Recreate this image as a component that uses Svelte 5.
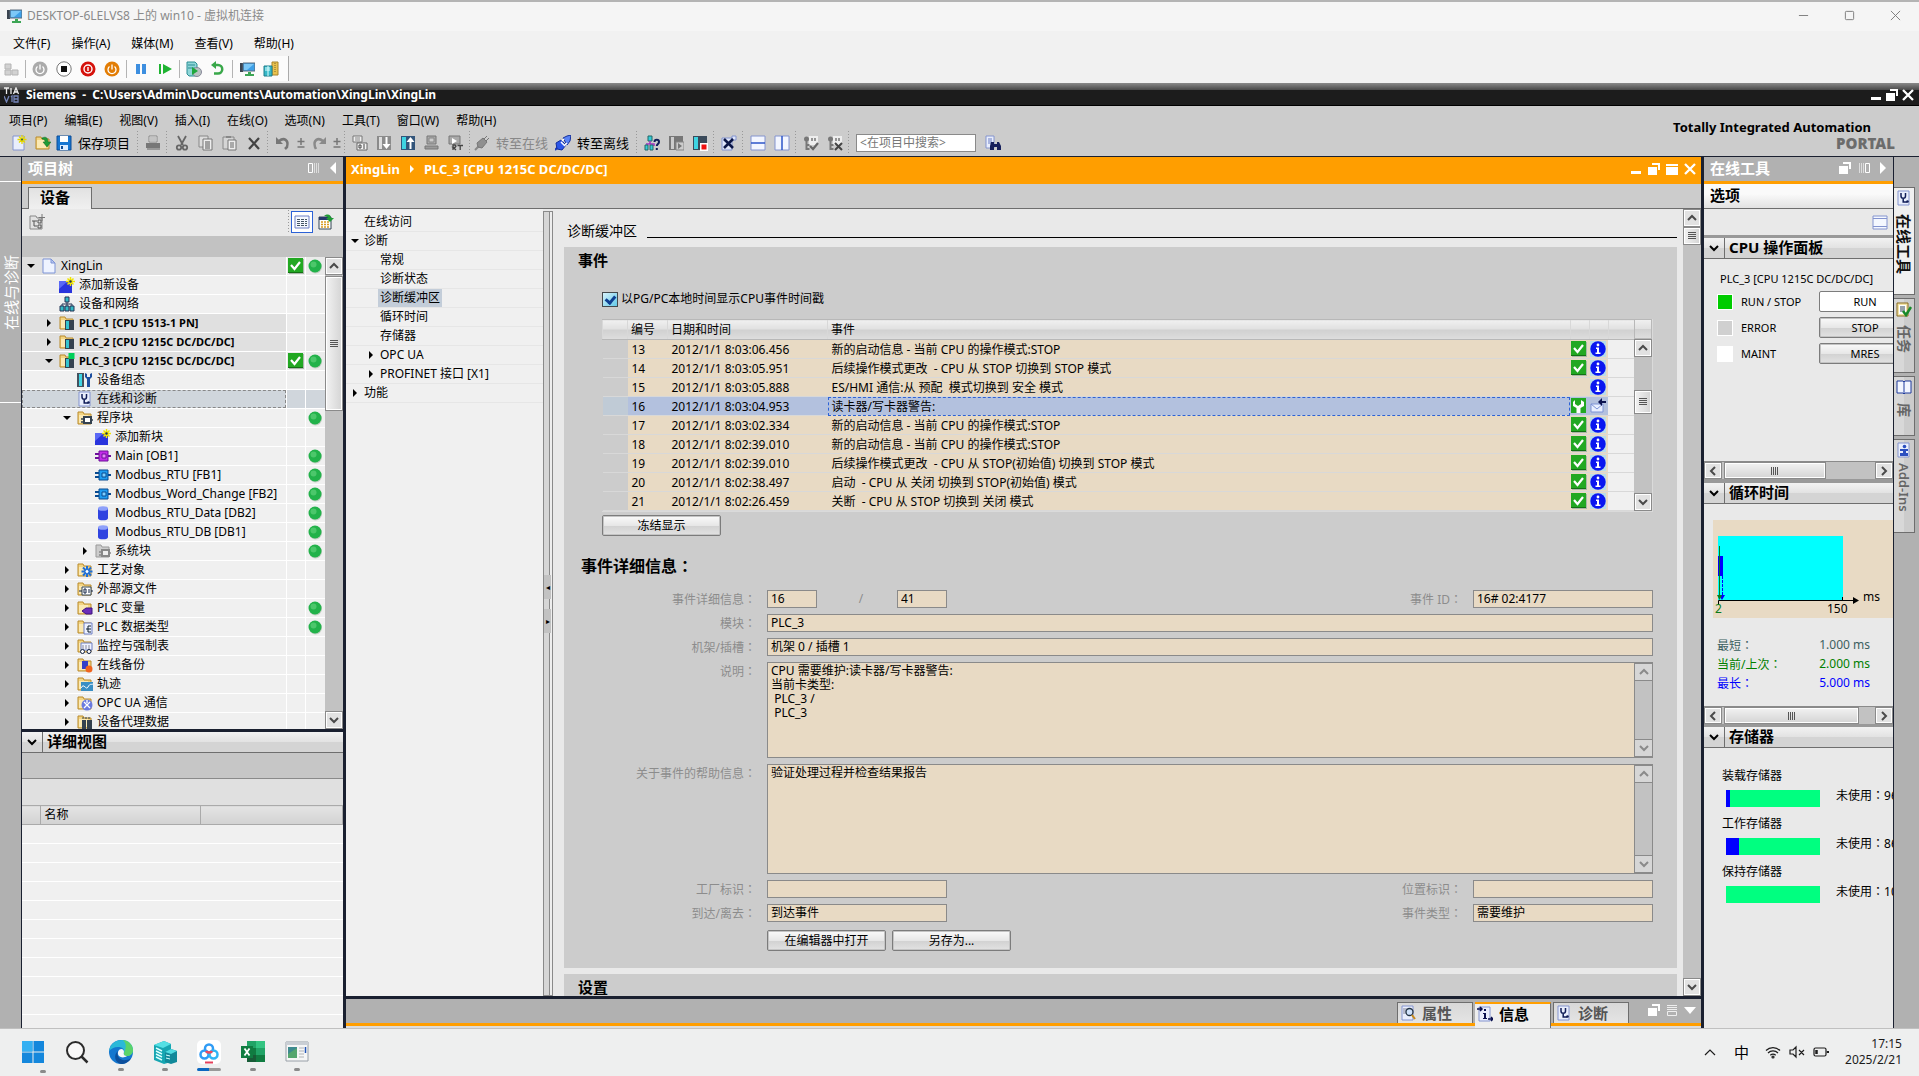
<script>
  const folder = '<path d="M1 2h5l1 2h7v10H1z" fill="#f3d583" stroke="#b98a2b"/><path d="M2 5h9v8H2z" fill="#fbe9b4"/>';
  const sheet = '<path d="M2 1h11v14H2z" fill="#e9eefc" stroke="#8494cf"/>';
  const I = {
    monitor: '<path d="M1 2h3v9H1z" fill="#3b4450"/><path d="M4 2h12v8H4z" fill="#3ea0e8" stroke="#5a6c7c"/><path d="M5 3h10l-7 6H5z" fill="#7cc8f7"/><path d="M9 11h3v2h3v2H6v-2h3z" fill="#3da555"/>',
    keys: '<path d="M1 3h6v5H1zM1 9h6v5H1zM8 9h6v5H8z" fill="#d2d2d2" stroke="#b5b5b5"/>',
    powerOff: '<circle cx="8" cy="8" r="7.5" fill="#aaa"/><path d="M5.5 5.5a4 4 0 1 0 5 0M8 3.5v5" fill="none" stroke="#fff" stroke-width="1.3"/>',
    stop: '<circle cx="8" cy="8" r="7.2" fill="#fff" stroke="#777"/><path d="M5 5h6v6H5z" fill="#111"/>',
    record: '<circle cx="8" cy="8" r="7.5" fill="#d5120c"/><circle cx="8" cy="8" r="4" fill="none" stroke="#fff" stroke-width="1.4"/><path d="M7.3 6h1.4v4H7.3z" fill="#fff"/>',
    powerOn: '<circle cx="8" cy="8" r="7.5" fill="#e27d05"/><path d="M5.5 5.5a4 4 0 1 0 5 0M8 3.5v5" fill="none" stroke="#fff" stroke-width="1.3"/>',
    pause: '<path d="M3 3h4v10H3zM9 3h4v10H9z" fill="#3d8fe0"/>',
    play: '<path d="M2 3h2v10H2zM6 3l9 5-9 5z" fill="#1fb432"/>',
    checkpoint: '<path d="M1 1h8l2 2v12H3L1 13z" fill="#8fd6d8" stroke="#2b8d93"/><path d="M2 4h7M2 7h7" stroke="#2b8d93"/><circle cx="11" cy="11" r="4.5" fill="#b9c3c3" stroke="#889"/><path d="M6 6l6 4-6 4z" fill="#1fa83c"/>',
    revert: '<path d="M5 4h3a4 4 0 0 1 0 8.500H4" fill="none" stroke="#39a84a" stroke-width="2.500"/><path d="M6 0v8L1 4z" fill="#39a84a"/>',
    share: '<path d="M9 1h6v13H9z" fill="#e9c24e" stroke="#a8842a"/><path d="M12 2v10" stroke="#7d642a" stroke-dasharray="1 1"/><path d="M1 5h8v10H1z" fill="#35b8c8" stroke="#1c7c8b"/><path d="M5 5v10M2 7h5M2 9h5" stroke="#dff"/>',
    tia: '<path d="M0 1h5M2.500 1v6M7 1v6M9.500 7l2.500-6 2.500 6M10.500 5h3" stroke="#eee" stroke-width="1.300" fill="none"/><path d="M0 9l2.500 6L5 9M7 10l1-1v6M10 9h4v6h-4zM10 12h4" stroke="#7484b8" stroke-width="1.300" fill="none"/>',
    newp: sheet + '<path d="M11 0v9M6.500 4.500h9M8 1.500l6 6M14 1.500l-6 6" stroke="#e6d800" stroke-width="1.300"/><circle cx="11" cy="4.500" r="1" fill="#355"/>',
    open: folder + '<path d="M7 3c4-2 6 0 6 4h3l-4 5-4-5h2c0-2-1-3-3-3z" fill="#1f9b35" stroke="#0d6a20" stroke-width=".5"/>',
    save: '<path d="M1 1h14v14H1z" fill="#1676d2" stroke="#0d4c96"/><path d="M4 1h8v6H4z" fill="#fff"/><path d="M4 10h8v5H4z" fill="#dcecff"/><path d="M5 11h2v3H5z" fill="#0d4c96"/>',
    print: '<path d="M4 1h8v6H4z" fill="#eee" stroke="#888"/><path d="M1 8h14v5H1z" fill="#777"/><path d="M2 13h13v2H2z" fill="#999"/><path d="M5 3h6M5 5h6" stroke="#999"/>',
    cut: '<path d="M4 1l5 9M12 1L7 10" stroke="#666" stroke-width="1.800"/><circle cx="5" cy="12.500" r="2.200" fill="none" stroke="#666" stroke-width="1.800"/><circle cx="11" cy="12.500" r="2.200" fill="none" stroke="#666" stroke-width="1.800"/>',
    copy: '<path d="M1 1h9v11H1z" fill="#ddd" stroke="#888"/><path d="M5 4h9v11H5z" fill="#eee" stroke="#777"/><path d="M7 7h5M7 9h5M7 11h5M7 13h5" stroke="#555"/>',
    paste: '<path d="M1 2h11v12H1z" fill="#d5d5d5" stroke="#888"/><path d="M4 1h5v2H4z" fill="#888"/><path d="M6 5h8v10H6z" fill="#eee" stroke="#777"/><path d="M8 8h4M8 10h4M8 12h4" stroke="#666"/>',
    del: '<path d="M3 3l10 11M13 3L3 14" stroke="#444" stroke-width="2.200"/>',
    undo: '<path d="M4 6c5-4 10-1 8 6l-2 2" fill="none" stroke="#777" stroke-width="2.500"/><path d="M1 2v7h7z" fill="#777"/>',
    redo: '<path d="M12 6C7 2 2 5 4 12l1 2" fill="none" stroke="#8a8a8a" stroke-width="2.500"/><path d="M15 2v7H8z" fill="#8a8a8a"/>',
    pm: '<path d="M8 3v7M4.500 6.500h7M4.500 12h7" stroke="#777" stroke-width="1.500"/>',
    compile: '<path d="M1 1h9v6H1z" fill="#eee" stroke="#777"/><path d="M3 3h5M3 5h5" stroke="#888"/><path d="M5 8h10v7H5z" fill="#f4f4f4" stroke="#666"/><path d="M7 10h2v3H7zM12 9v5" fill="none" stroke="#444"/>',
    down: '<path d="M1 1h14v14H1z" fill="#8b8b8b"/><path d="M3 2h3v12H3z" fill="#ddd"/><path d="M9.500 2h2v7h3l-4 5-4-5h3z" fill="#fff"/>',
    up: '<path d="M1 1h14v14H1z" fill="#33557a"/><path d="M2 2h4v12H2z" fill="#3fd4e2"/><path d="M9.500 14h2V7h3l-4-5-4 5h3z" fill="#fff"/>',
    sim: '<path d="M3 1h9v8H3z" fill="#aaa" stroke="#777"/><path d="M5 3h5v4H5z" fill="#ccc" stroke="#888"/><path d="M1 11h13v3H1z" fill="#9a9a9a" stroke="#777"/>',
    rt: '<path d="M1 1h11v8H1z" fill="#aaa" stroke="#777"/><path d="M4 3l5 3-5 3z" fill="#fff"/><path d="M5 15v-5h2l1 1-1 1.500H5l3 2.500M9.500 10.500H15M12.200 10v5" stroke="#444" fill="none" stroke-width="1.300"/>',
    plugOff: '<path d="M1 15l4-4" stroke="#888" stroke-width="2"/><path d="M3 8l6-5 4 4-5 6-4-1z" fill="#8f8f8f" stroke="#777"/><path d="M10 4l3-3M12 6l3-3" stroke="#777"/>',
    plugOn: '<path d="M0 15l4-4" stroke="#1c37b8" stroke-width="2"/><path d="M1 8l5-3 5 5-4 5-5-1z" fill="#2c56e8" stroke="#142f9c"/><path d="M8 3l4-2 4-1-1 6-3 4z" fill="#5a83f5" stroke="#142f9c"/><path d="M7 6l2-2M10 10l2-2M6 7l4 4" stroke="#fff" stroke-width="1.500"/>',
    access: '<path d="M4 1h4v5H4z" fill="#35cdd8" stroke="#266"/><path d="M6 6v3M2 9h8v2" stroke="#a030c0" fill="none" stroke-width="1.500"/><path d="M1 10h3v5H1zM6 10h3v5H6z" fill="#35cdd8" stroke="#266"/><path d="M10.500 7c0-3 4.500-3 4.500 0 0 2-2.200 2-2.200 4M12.800 13v2" stroke="#101d58" stroke-width="2" fill="none"/>',
    startg: '<path d="M1 1h14v14H1z" fill="#777"/><path d="M3 2h3v12H3z" fill="#ccc"/><path d="M8 7h8v8H8z" fill="#ccc" stroke="#888"/><path d="M10 8l4 3-4 3z" fill="#777"/>',
    stopc: '<path d="M1 1h14v14H1z" fill="#3a4a5a"/><path d="M2 2h4v12H2z" fill="#3fd4e2"/><path d="M8 8h8v8H8z" fill="#fff"/><path d="M9.500 9.500h5v5h-5z" fill="#f01010"/>',
    cross: '<path d="M1 3h10v12H1zM11 1h4v4h-4z" fill="#dfe6fa" stroke="#8494cf"/><path d="M3 4l9 9M12 4l-9 9" stroke="#0b1646" stroke-width="2.600"/>',
    splith: '<path d="M1 1h14v14H1z" fill="#f3f6ff" stroke="#8494cf"/><path d="M1 8h14" stroke="#2c55c8" stroke-width="1.500"/>',
    splitv: '<path d="M1 1h14v14H1z" fill="#f3f6ff" stroke="#8494cf"/><path d="M8 1v14" stroke="#2c55c8" stroke-width="1.500"/>',
    libok: '<path d="M6 1h9v9H6z" fill="#eee"/><circle cx="3.500" cy="4" r="2.500" fill="#777"/><path d="M3.500 5v10M3.500 10h3M3.500 14h3" stroke="#777" stroke-width="2"/><path d="M9 3v3M12 3v3" stroke="#777" stroke-width="1.500"/><path d="M7 11l3 3 5-6" stroke="#666" stroke-width="2.200" fill="none"/>',
    libx: '<path d="M6 1h9v9H6z" fill="#eee"/><circle cx="3.500" cy="4" r="2.500" fill="#777"/><path d="M3.500 5v10M3.500 10h3M3.500 14h3" stroke="#777" stroke-width="2"/><path d="M9 3v3M12 3v3" stroke="#777" stroke-width="1.500"/><path d="M8 8l7 7M15 8l-7 7" stroke="#444" stroke-width="2"/>',
    find: '<path d="M1 1h8v12H1z" fill="#e9eefc" stroke="#8494cf"/><path d="M3 4h4M3 6h4M3 8h4" stroke="#6c7fc4"/><path d="M6 7h3v8H5v-4zM12 7h2l2 4v4h-4zM9 9h3v3H9z" fill="#17205c"/>',
    proj: '<path d="M2 1h8l4 4v10H2z" fill="#eef3ff" stroke="#7d93d6"/><path d="M10 1v4h4z" fill="#b9c8f0" stroke="#7d93d6"/>',
    add: '<path d="M0 4h13v12H0z" fill="#2a35dd"/><path d="M0 4h9L0 12z" fill="#5a68f5"/><path d="M11.500 0v9M7 4.500h9M8.500 1.500l6 6M14.500 1.500l-6 6" stroke="#f0e400" stroke-width="1.500"/><circle cx="11.500" cy="4.500" r="1.200" fill="#235"/>',
    net: '<path d="M6 1h4v5H6zM1 10h4v5H1zM6 10h4v5H6zM11 10h4v5h-4z" fill="#35b8c4" stroke="#235"/><path d="M8 6v4M3 10V8h10v2" stroke="#235" fill="none"/>',
    plc: folder + '<path d="M6 5h9v10H6z" fill="#34414f"/><path d="M7 6h3v8H7z" fill="#35c4d0"/>',
    plcOn: folder + '<path d="M6 5h9v10H6z" fill="#34414f"/><path d="M7 6h3v8H7z" fill="#35c4d0"/><path d="M9.500 0h6v6h-6z" fill="#00d05a"/>',
    config: '<path d="M0 1h7v14H0z" fill="#44515e"/><path d="M2 2h3v12H2z" fill="#3fd4e2"/><path d="M8 1v4l2 2v8h3V7l2-2V1l-2 1v3h-3V2z" fill="#1d4fa0"/>',
    diag: sheet + '<path d="M5 3v3a2.200 2.200 0 0 0 4.500 0V3M7.200 8v4h4" stroke="#101d58" stroke-width="1.500" fill="none"/><circle cx="11.500" cy="11.500" r="1.300" fill="#101d58"/>',
    blocks: folder + '<path d="M7 7h7v6H7z" fill="#fff" stroke="#34414f" stroke-width="2"/><path d="M4 9h3M4 12h3M14 10h2" stroke="#34414f" stroke-width="1.500"/>',
    sysblocks: '<path d="M1 2h5l1 2h7v10H1z" fill="#ccc" stroke="#999"/><path d="M7 7h7v6H7z" fill="#eee" stroke="#888" stroke-width="2"/><path d="M4 9h3M4 12h3M14 10h2" stroke="#888" stroke-width="1.500"/>',
    ob: '<path d="M4 3h9v10H4z" fill="#c22be8" stroke="#6d109a"/><path d="M7 6h4v4H7z" fill="#e58cf8" stroke="#6d109a"/><path d="M0 6h4M0 10h4M13 8h3" stroke="#6d109a" stroke-width="2"/>',
    fb: '<path d="M4 3h9v10H4z" fill="#1e9cf0" stroke="#084a90"/><path d="M7 6h4v4H7z" fill="#7fd0ff" stroke="#084a90"/><path d="M0 6h4M0 10h4M13 8h3" stroke="#084a90" stroke-width="2"/>',
    db: '<path d="M3 3v10a5 2.300 0 0 0 10 0V3z" fill="#2f43e0"/><ellipse cx="8" cy="3.500" rx="5" ry="2.300" fill="#8ea0fa"/>',
    tech: folder + '<path d="M10 4v11M4.500 9.500h11M6 5.500l8 8M14 5.500l-8 8" stroke="#1f6fd6" stroke-width="2"/><circle cx="10" cy="9.500" r="2" fill="#fff" stroke="#1f6fd6"/>',
    src: folder + '<path d="M5 6h9v8H5z" fill="#fff" stroke="#345"/><path d="M7 8h2v4H7zM12 8v4M2 10h3M14 10h2" stroke="#124" fill="none"/>',
    tags: folder + '<path d="M5 11l4-3h6v6H9z" fill="#6b2db8" stroke="#3f1480"/>',
    types: folder + '<path d="M7 4h8v11H7z" fill="#eef2ff" stroke="#6c7fc4"/><path d="M9 10h2M11 7v6M11 7h3M11 10h3M11 13h3" stroke="#123"/>',
    watch: folder + '<path d="M4 5h11v7H4z" fill="#eef2ff" stroke="#6c7fc4"/><path d="M5 8h9M5 10h9" stroke="#889" stroke-dasharray="2 1"/><circle cx="5.500" cy="13.500" r="2" fill="#fff" stroke="#124"/><circle cx="12" cy="13.500" r="2" fill="#fff" stroke="#124"/>',
    backup: folder + '<path d="M5 4h6v8H5z" fill="#3240c8"/><circle cx="12" cy="12" r="3.500" fill="#f0641e"/>',
    trace: folder + '<path d="M4 6h12v9H4z" fill="#3a8fc4"/><path d="M4 12c3-6 5 3 7-1s3-2 5-3" stroke="#fff" fill="none"/>',
    opc: folder + '<circle cx="10" cy="10" r="5.500" fill="#6a7be0"/><path d="M7 7l6 6M13 7l-6 6M10 5v3" stroke="#fff" stroke-width="1.300"/>',
    proxy: folder + '<path d="M5 6h4v9H5zM10 6h5v9h-5z" fill="#34414f"/><path d="M5 4h9" stroke="#345" stroke-dasharray="2 1"/>',
    ok: '<path d="M1 1h15v15H1z" fill="#a9b8a9"/><path d="M0 0h15v15H0z" fill="#22a822"/><path d="M0 14h15v1H0z" fill="#147014"/><path d="M3 7l3.500 4L12 4" stroke="#fff" stroke-width="2.200" fill="none"/>',
    dot: '<circle cx="8.500" cy="9" r="6.500" fill="#c3cfc3"/><circle cx="8" cy="8" r="6.500" fill="#22b24a"/><circle cx="6.500" cy="6.500" r="3" fill="#4cc76b"/>',
    info: '<path d="M0 0h16v16H0z" fill="#b9dcea"/><circle cx="8" cy="8" r="7.700" fill="#0a16f0"/><circle cx="8" cy="4" r="1.400" fill="#fff"/><path d="M6 6.500h3v5h1.500V13h-5v-1.500H7V8H6z" fill="#fff"/>',
    wrench: '<path d="M0 0h15v15H0z" fill="#22a822"/><path d="M4 2v4l3 2 3-2V2l3 2v4L9.500 10v5h-4v-5L2 8V4z" fill="#fff"/>',
    mail: '<path d="M1 6h12v8H1z" fill="#e8efff" stroke="#7d93d6"/><path d="M1 6l6 5 6-5" fill="none" stroke="#7d93d6"/><path d="M8 4l4-4v3h4v2h-4v3z" fill="#0b1250"/>',
    treeNew: '<path d="M1 2h6l1 2h5v11H1z" fill="#e2e2e2" stroke="#888"/><path d="M3 7h5M5 7v5h3M9 6h3v3H9zM9 11h3v3H9z" stroke="#555" fill="none"/><path d="M13 0v7M9.500 3.500h7" stroke="#777"/>',
    list: '<path d="M1 2h14v12H1z" fill="#f5f8ff" stroke="#6c7fc4"/><path d="M3 5.500h10M3 7.500h10M3 9.500h10M3 11.500h10" stroke="#456" stroke-dasharray="3 1"/>',
    sync: '<path d="M1 3h12v12H1z" fill="#fff" stroke="#345"/><path d="M1 3h12v3H1z" fill="#26386b"/><path d="M3 8h9M3 10.500h9M3 13h9" stroke="#d99a1e" stroke-width="1.500" stroke-dasharray="2 1"/><path d="M6 2c4-3 7-1 7 2h3l-4 4-4-4h2c0-1-2-2-4-2z" fill="#1f9b35"/>',
    float: '<path d="M6 2h8v7h-2V4H6z" fill="#fff"/><path d="M2 6h9v8H2z" fill="#fff"/>',
    min: '<path d="M3 10h10v3H3z" fill="#fff"/>',
    max: '<path d="M2 3h12v2H2zM2 6h12v8H2z" fill="#fff"/>',
    close: '<path d="M3 3l10 10M13 3L3 13" stroke="#fff" stroke-width="2.300"/>',
    pinl: '<path d="M2.500 3.500h4v9h-4z" fill="none" stroke="#fff"/><path d="M8.500 3v10M10.500 3v10M12.500 3v10" stroke="#ddd"/>',
    pinr: '<path d="M9.500 3.500h4v9h-4z" fill="none" stroke="#fff"/><path d="M3.500 3v10M5.500 3v10M7.500 3v10" stroke="#ddd"/>',
    tril: '<path d="M11 2v12L5 8z" fill="#fff"/>',
    trir: '<path d="M5 2v12l6-6z" fill="#fff"/>',
    trid: '<path d="M2 5h12l-6 7z" fill="#fff"/>',
    lines: '<path d="M3 3.500h10M3 5.500h10M3 7.500h10M3.500 9.500h9v4h-9z" stroke="#eee" fill="none"/>',
    pane: '<path d="M1 2h14v13H1z" fill="#f5f8ff" stroke="#8494cf"/><path d="M1 4.500h14M1 12.500h14" stroke="#8494cf"/>',
    task: '<path d="M1 2h11v13H1z" fill="#f2e3a8" stroke="#8a6d20"/><path d="M3 4h7v9H3z" fill="#fff"/><path d="M4 6h5M4 8h5M4 10h5" stroke="#345"/><path d="M7 10l3 4 5-8" stroke="#178a2a" stroke-width="2.500" fill="none"/>',
    book: '<path d="M1 2h6l1 1 1-1h6v12H9l-1 1-1-1H1z" fill="#f2f6ff" stroke="#1e3a9c"/><path d="M8 3v11" stroke="#1e3a9c"/>',
    addin: sheet + '<circle cx="8.500" cy="4.500" r="1.800" fill="#2c4fc0"/><path d="M4 7h8v2h-2v2h2v3H4v-3h3V9H4z" fill="#2c4fc0"/>',
    prop: sheet + '<path d="M3 4h4M3 6h3M3 8h3" stroke="#889"/><circle cx="9.500" cy="7" r="3.500" fill="#cfe2fa" stroke="#234" stroke-width="1.300"/><path d="M12 10l3 4" stroke="#c98a1a" stroke-width="2"/>',
    inf: sheet + '<path d="M0 3h5M3 1l2 2-2 2M11 13h5M14 11l2 2-2 2" stroke="#0b1250" stroke-width="1.500" fill="none"/><path d="M7 3h2v2H7zM6 7h3v5h1v1H6v-1h1V8H6z" fill="#0b1250"/>'
  };

  const hostMenu = ['文件(F)', '操作(A)', '媒体(M)', '查看(V)', '帮助(H)'];
  const hostTools = ['keys', '|', 'powerOff', 'stop', 'record', 'powerOn', '|', 'pause', 'play', '|', 'checkpoint', 'revert', '|', 'monitor', 'share'];
  const menu = ['项目(P)', '编辑(E)', '视图(V)', '插入(I)', '在线(O)', '选项(N)', '工具(T)', '窗口(W)', '帮助(H)'];
  const tools = [
    'newp', 'open', ['save', '保存项目'], '|', 'print', '|', 'cut', 'copy', 'paste', 'del', '|', 'undo', 'pm', 'redo', 'pm', '|',
    'compile', 'down', 'up', 'sim', 'rt', '|', ['plugOff', '转至在线', 'off'], ['plugOn', '转至离线'], '|', 'access', 'startg', 'stopc', '|',
    'cross', '|', 'splith', 'splitv', '|', 'libok', 'libx', '|'
  ];

  // level, arrow (d = open, r = closed), icon, label, style, ok mark, status dot
  const tree = [
    [0, 'd', 'proj', 'XingLin', 'head', 1, 1],
    [1, '', 'add', '添加新设备'],
    [1, '', 'net', '设备和网络'],
    [1, 'r', 'plc', 'PLC_1 [CPU 1513-1 PN]', 'head strong'],
    [1, 'r', 'plc', 'PLC_2 [CPU 1215C DC/DC/DC]', 'head strong'],
    [1, 'd', 'plcOn', 'PLC_3 [CPU 1215C DC/DC/DC]', 'head strong', 1, 1],
    [2, '', 'config', '设备组态'],
    [2, '', 'diag', '在线和诊断', 'sel'],
    [2, 'd', 'blocks', '程序块', '', 0, 1],
    [3, '', 'add', '添加新块'],
    [3, '', 'ob', 'Main [OB1]', '', 0, 1],
    [3, '', 'fb', 'Modbus_RTU [FB1]', '', 0, 1],
    [3, '', 'fb', 'Modbus_Word_Change [FB2]', '', 0, 1],
    [3, '', 'db', 'Modbus_RTU_Data [DB2]', '', 0, 1],
    [3, '', 'db', 'Modbus_RTU_DB [DB1]', '', 0, 1],
    [3, 'r', 'sysblocks', '系统块', '', 0, 1],
    [2, 'r', 'tech', '工艺对象'],
    [2, 'r', 'src', '外部源文件'],
    [2, 'r', 'tags', 'PLC 变量', '', 0, 1],
    [2, 'r', 'types', 'PLC 数据类型', '', 0, 1],
    [2, 'r', 'watch', '监控与强制表'],
    [2, 'r', 'backup', '在线备份'],
    [2, 'r', 'trace', '轨迹'],
    [2, 'r', 'opc', 'OPC UA 通信'],
    [2, 'r', 'proxy', '设备代理数据']
  ];

  const nav = [
    ['n0', '', '在线访问'], ['n0', 'd', '诊断'], ['n1', '', '常规'], ['n1', '', '诊断状态'], ['n1', '', '诊断缓冲区', 'on'],
    ['n1', '', '循环时间'], ['n1', '', '存储器'], ['n1', 'r', 'OPC UA'], ['n1', 'r', 'PROFINET 接口 [X1]'], ['n0', 'r', '功能']
  ];

  const events = [
    [13, '2012/1/1 8:03:06.456', '新的启动信息 - 当前 CPU 的操作模式:STOP', 'ok', 'info'],
    [14, '2012/1/1 8:03:05.951', '后续操作模式更改  - CPU 从 STOP 切换到 STOP 模式', 'ok', 'info'],
    [15, '2012/1/1 8:03:05.888', 'ES/HMI 通信:从 预配  模式切换到 安全 模式', '', 'info'],
    [16, '2012/1/1 8:03:04.953', '读卡器/写卡器警告:', 'wrench', 'mail'],
    [17, '2012/1/1 8:03:02.334', '新的启动信息 - 当前 CPU 的操作模式:STOP', 'ok', 'info'],
    [18, '2012/1/1 8:02:39.010', '新的启动信息 - 当前 CPU 的操作模式:STOP', 'ok', 'info'],
    [19, '2012/1/1 8:02:39.010', '后续操作模式更改  - CPU 从 STOP(初始值) 切换到 STOP 模式', 'ok', 'info'],
    [20, '2012/1/1 8:02:38.497', '启动  - CPU 从 关闭 切换到 STOP(初始值) 模式', 'ok', 'info'],
    [21, '2012/1/1 8:02:26.459', '关断  - CPU 从 STOP 切换到 关闭 模式', 'ok', 'info']
  ];

  const memory = [['装载存储器', 4, '96'], ['工作存储器', 14, '86'], ['保持存储器', 0, '10']];
  const description = 'CPU 需要维护:读卡器/写卡器警告:\n当前卡类型:\n PLC_3 /\n PLC_3';
</script>

{#snippet ic(n)}<svg class="ic" viewBox="0 0 16 16" width="16" height="16" aria-hidden="true">{@html I[n]}</svg>{/snippet}
{#snippet arrow(d)}<span class="arrow">{#if d}<svg viewBox="0 0 10 10" width="10" height="10"><path d={d === 'd' ? 'M1 3h8L5 7z' : 'M3 1v8l4-4z'} /></svg>{/if}</span>{/snippet}
{#snippet chev(d)}<svg class="chev" viewBox="0 0 12 12" width="12" height="12"><path d={{ u: 'M2 8l4-4 4 4', d: 'M2 4l4 4 4-4', l: 'M8 2L4 6l4 4', r: 'M4 2l4 4-4 4' }[d]} /></svg>{/snippet}
{#snippet sbtn(d, name)}<button class="sbtn" aria-label={name}>{@render chev(d)}</button>{/snippet}
{#snippet colon()}<span class="colon">：</span>{/snippet}
{#snippet vbar(kind)}
  <div class="vbar {kind}">
    {@render sbtn('u', '向上滚动')}
    <div class="track"><div class="thumb"><i></i></div></div>
    {@render sbtn('d', '向下滚动')}
  </div>
{/snippet}
{#snippet hbar(kind)}
  <div class="hbar {kind}">
    {@render sbtn('l', '向左滚动')}
    <div class="track"><div class="thumb"><i></i></div></div>
    {@render sbtn('r', '向右滚动')}
  </div>
{/snippet}
{#snippet section(title)}
  <header class="section"><button aria-label="折叠">{@render chev('d')}</button><h2>{title}</h2></header>
{/snippet}

<div class="screen">
  <header class="host">
    <div class="hosttitle">
      {@render ic('monitor')}<span>DESKTOP-6LELVS8 上的 win10 - 虚拟机连接</span>
      <div class="winbtns">
        <button aria-label="最小化"><svg viewBox="0 0 12 12"><path d="M1 6h10" /></svg></button>
        <button aria-label="最大化"><svg viewBox="0 0 12 12"><rect x="1.500" y="1.500" width="9" height="9" rx="1" /></svg></button>
        <button aria-label="关闭"><svg viewBox="0 0 12 12"><path d="M1 1l10 10M11 1L1 11" /></svg></button>
      </div>
    </div>
    <nav class="hostmenu">{#each hostMenu as m}<button>{m}</button>{/each}</nav>
    <div class="hosttools">
      {#each hostTools as t}{#if t === '|'}<span class="hsep"></span>{:else}<button aria-label={t}>{@render ic(t)}</button>{/if}{/each}
    </div>
  </header>

  <div class="tiatitle">
    {@render ic('tia')}<span>Siemens&nbsp; - &nbsp;C:\Users\Admin\Documents\Automation\XingLin\XingLin</span>
    <div class="icons">{#each ['min', 'float', 'close'] as n}<button aria-label={n}>{@render ic(n)}</button>{/each}</div>
  </div>

  <div class="tiahead">
    <div class="bars">
      <nav class="menu">{#each menu as m}<button>{m}</button>{/each}</nav>
      <div class="tools">
        {#each tools as t}
          {#if t === '|'}<span class="sep"></span>
          {:else if Array.isArray(t)}<button class="lab {t[2] ?? ''}">{@render ic(t[0])}<span>{t[1]}</span></button>
          {:else}<button class={t} aria-label={t}>{@render ic(t)}</button>{/if}
        {/each}
        <input class="search" type="text" placeholder="<在项目中搜索>" aria-label="在项目中搜索" />
        <button aria-label="搜索">{@render ic('find')}</button>
      </div>
    </div>
    <div class="brand"><span>Totally Integrated Automation</span><strong>PORTAL</strong></div>
  </div>

  <div class="work">
    <aside class="leftstrip"><button>在线与诊断</button></aside>

    <section class="left">
      <header class="phead"><h2>项目树</h2><div class="icons"><button aria-label="固定">{@render ic('pinl')}</button><button aria-label="收起">{@render ic('tril')}</button></div></header>
      <div class="tabs"><button>设备</button></div>
      <div class="ptools">
        <button aria-label="新建">{@render ic('treeNew')}</button>
        <span class="sep"></span>
        <button class="act" aria-label="列表">{@render ic('list')}</button>
        <button aria-label="同步">{@render ic('sync')}</button>
      </div>
      <div class="gap"></div>
      <div class="treewrap">
        <ul class="tree">
          {#each tree as [lvl, arr, icon, label, cls, ok, dot]}
            <li class={cls}>
              <div class="name l{lvl}">{@render arrow(arr)}{@render ic(icon)}<span>{label}</span></div>
              <div class="cell">{#if ok}{@render ic('ok')}{/if}</div>
              <div class="cell last">{#if dot}{@render ic('dot')}{/if}</div>
            </li>
          {/each}
        </ul>
        {@render vbar('treebar')}
      </div>
      <div class="detail">
        {@render section('详细视图')}
        <div class="dtools"></div>
        <div class="dfilter"></div>
        <table class="dtable"><thead><tr><th class="c0"></th><th class="c1">名称</th><th></th></tr></thead></table>
        <div class="drows"></div>
      </div>
    </section>

    <main>
      <header class="mhead">
        <span>XingLin</span><svg viewBox="0 0 8 10" width="8" height="10"><path d="M2 1v8l4-4z" fill="#fff" /></svg><span>PLC_3 [CPU 1215C DC/DC/DC]</span>
        <div class="icons">{#each ['min', 'float', 'max', 'close'] as n}<button aria-label={n}>{@render ic(n)}</button>{/each}</div>
      </header>
      <div class="mbar"></div>
      <div class="mbody">
        <ul class="nav">
          {#each nav as [lvl, arr, label, on]}<li class={lvl}>{@render arrow(arr)}<a href="#diag" class={on}>{label}</a></li>{/each}
        </ul>
        <div class="splitter"><button aria-label="收起导航">◂</button><button aria-label="展开导航">▸</button></div>
        <div class="content">
          <h1>诊断缓冲区</h1>
          <section class="box">
            <h3>事件</h3>
            <label class="check"><input type="checkbox" checked /><span>以PG/PC本地时间显示CPU事件时间戳</span></label>
            <div class="grid">
              <table class="events">
                <colgroup><col class="k0" /><col class="k1" /><col class="k2" /><col /><col class="k4" /><col class="k4" /><col class="k6" /></colgroup>
                <thead><tr><th></th><th>编号</th><th>日期和时间</th><th>事件</th><th></th><th></th><th></th></tr></thead>
                <tbody>
                  {#each events as [no, time, text, a, b]}
                    <tr class:picked={no === 16}>
                      <td></td><td>{no}</td><td>{time}</td><td class="txt">{text}</td>
                      <td class="im">{#if a}{@render ic(a)}{/if}</td><td class="im">{@render ic(b)}</td><td></td>
                    </tr>
                  {/each}
                </tbody>
              </table>
              <div class="gridbar"><div class="corner"></div>{@render vbar('evbar')}</div>
            </div>
            <button class="btn freeze">冻结显示</button>

            <h3 class="big">事件详细信息{@render colon()}</h3>
            <div class="form">
              <div class="row">
                <label for="f-no">事件详细信息{@render colon()}</label><input id="f-no" class="w50" readonly value="16" />
                <span class="slash">/</span><input class="w50" readonly value="41" aria-label="事件总数" />
                <span class="fill"></span>
                <label for="f-id">事件 ID{@render colon()}</label><input id="f-id" class="w180" readonly value="16# 02:4177" />
              </div>
              <div class="row"><label for="f-mod">模块{@render colon()}</label><input id="f-mod" class="wide" readonly value="PLC_3" /></div>
              <div class="row"><label for="f-rack">机架/插槽{@render colon()}</label><input id="f-rack" class="wide" readonly value="机架 0 / 插槽 1" /></div>
              <div class="row"><label for="f-desc">说明{@render colon()}</label><div class="area a1"><textarea id="f-desc" readonly value={description}></textarea>{@render vbar('plain')}</div></div>
              <div class="row"><label for="f-help">关于事件的帮助信息{@render colon()}</label><div class="area a2"><textarea id="f-help" readonly value="验证处理过程并检查结果报告"></textarea>{@render vbar('plain')}</div></div>
              <div class="row">
                <label for="f-plant">工厂标识{@render colon()}</label><input id="f-plant" class="w180" readonly value="" /><span class="fill"></span>
                <label for="f-loc">位置标识{@render colon()}</label><input id="f-loc" class="w180" readonly value="" />
              </div>
              <div class="row">
                <label for="f-in">到达/离去{@render colon()}</label><input id="f-in" class="w180" readonly value="到达事件" /><span class="fill"></span>
                <label for="f-type">事件类型{@render colon()}</label><input id="f-type" class="w180" readonly value="需要维护" />
              </div>
              <div class="actions"><button class="btn">在编辑器中打开</button><button class="btn">另存为...</button></div>
            </div>
          </section>
          <section class="box next"><h3>设置</h3></section>
        </div>
        {@render vbar('mainbar')}
      </div>
      <footer class="mtabs">
        <button>{@render ic('prop')}<span>属性</span></button>
        <button class="on">{@render ic('inf')}<span>信息</span></button>
        <button>{@render ic('diag')}<span>诊断</span></button>
        <div class="icons">{#each ['float', 'lines', 'trid'] as n}<button aria-label={n}>{@render ic(n)}</button>{/each}</div>
      </footer>
    </main>

    <section class="right">
      <header class="phead"><h2>在线工具</h2><div class="icons">{#each ['float', 'pinr', 'trir'] as n}<button aria-label={n}>{@render ic(n)}</button>{/each}</div></header>
      <h2 class="opt">选项</h2>
      <div class="rtools"><button aria-label="窗格">{@render ic('pane')}</button></div>
      {@render section('CPU 操作面板')}
      <div class="cpu">
        <p>PLC_3 [CPU 1215C DC/DC/DC]</p>
        <div class="led"><i class="run"></i><span>RUN / STOP</span><button class="btn lit">RUN</button></div>
        <div class="led"><i class="err"></i><span>ERROR</span><button class="btn">STOP</button></div>
        <div class="led"><i class="mnt"></i><span>MAINT</span><button class="btn">MRES</button></div>
      </div>
      {@render hbar('h1')}
      {@render section('循环时间')}
      <div class="cycle">
        <svg class="chart" width="200" height="98" viewBox="0 0 200 98">
          <rect width="200" height="98" fill="#e8dac4" />
          <rect x="5" y="16" width="125" height="64" fill="#0ff" />
          <rect x="5" y="36" width="5" height="20" fill="#00f" />
          <path d="M9.500 56v20" stroke="#00f" stroke-dasharray="3 1" /><path d="M6 75h6l-3 5z" fill="#00f" />
          <path d="M6.500 26v52" stroke="#0a7a1a" /><path d="M4 75h5l-2.500 5z" fill="#0a7a1a" />
          <path d="M5.500 85v-4.500h135M129.500 77v3" stroke="#000" fill="none" /><path d="M140 77v7l6-3.500z" />
          <text x="150" y="81">ms</text><text x="2" y="93" class="g">2</text><text x="114" y="93">150</text>
        </svg>
        <dl>
          <div class="c1"><dt>最短{@render colon()}</dt><dd>1.000 ms</dd></div>
          <div class="c2"><dt>当前/上次{@render colon()}</dt><dd>2.000 ms</dd></div>
          <div class="c3"><dt>最长{@render colon()}</dt><dd>5.000 ms</dd></div>
        </dl>
      </div>
      {@render hbar('h2')}
      {@render section('存储器')}
      <div class="mem">
        {#each memory as [name, used, free]}
          <div class="m"><span>{name}</span><div class="mr"><div class="meter"><i style:width="{used}%"></i></div><span>未使用{@render colon()}{free}</span></div></div>
        {/each}
      </div>
    </section>

    <aside class="rightstrip">
      <button class="t1 on">{@render ic('diag')}<span>在线工具</span></button>
      <button class="t2">{@render ic('task')}<span>任务</span></button>
      <button class="t3">{@render ic('book')}<span>库</span></button>
      <button class="t4">{@render ic('addin')}<span>Add-Ins</span></button>
    </aside>
  </div>

  <footer class="taskbar">
    <div class="apps">
      <button aria-label="开始"><svg viewBox="0 0 24 24"><path d="M1 1h10.500v10.500H1zM12.500 1H23v10.500H12.500zM1 12.500h10.500V23H1zM12.500 12.500H23V23H12.500z" fill="#1487dc" /><path d="M1 1h10.500v10.500H1z" fill="#35b0f2" /></svg></button>
      <button aria-label="搜索"><svg viewBox="0 0 24 24"><circle cx="10.500" cy="10.500" r="8.500" fill="#f8f8f8" stroke="#2b2b2b" stroke-width="2" /><path d="M16.500 16.500l6 6" stroke="#2b2b2b" stroke-width="2.500" /></svg></button>
      <button class="open" aria-label="Edge"><svg viewBox="0 0 24 24"><circle cx="12" cy="12" r="12" fill="#1477cf" /><path d="M0 11C1 3 8 0 13 0c7 0 11 5 11 10 0 4-3 6-6 6-2 0-4-1-3-3 1-4-2-6-6-6-4 0-7 2-9 4z" fill="#2bb9d8" /><path d="M14 0c7 1 10 6 10 10 0 4-3 6-6 6-2 0-4-1-3-3 2-5 3-9-1-13z" fill="#5ad36a" /><path d="M9 11c-2 5 2 10 8 9 2 0 4-1 5-2-2 4-6 6-10 6-6-1-8-9-3-13z" fill="#0c4f9c" /><path d="M9 12c1-4 6-4 6 0-1 3 1 4 3 4-4 3-10 1-9-4z" fill="#f4f8fb" /></svg></button>
      <button class="open" aria-label="服务器管理器"><svg viewBox="0 0 24 24"><path d="M1 5l10-4 7 3v18l-7 2-10-4z" fill="#16a6b2" /><path d="M1 5l10-4 7 3-8 4z" fill="#53e0e4" /><path d="M3 8l6 3M3 11l6 3M3 14l6 3M3 17l6 3" stroke="#d8ffff" stroke-width="1.500" /><path d="M12 12l6-3 6 2v11l-6 2-6-2z" fill="#11899a" /><path d="M12 12l6-3 6 2-6 3z" fill="#4fdce2" /><path d="M13 15l4 1M13 18l4 1" stroke="#d8ffff" /></svg></button>
      <button class="cur" aria-label="网盘"><svg viewBox="0 0 24 24"><rect width="24" height="24" rx="5" fill="#fff" /><circle cx="12" cy="8.500" r="4" fill="none" stroke="#2f9bf5" stroke-width="2.500" /><circle cx="7.500" cy="14.500" r="4" fill="none" stroke="#2f9bf5" stroke-width="2.500" /><circle cx="16.500" cy="14.500" r="4" fill="none" stroke="#2fb5f5" stroke-width="2.500" /><path d="M9 11c1 2 5 2 6 0" stroke="#f04a5c" stroke-width="2.500" fill="none" /><path d="M8 22.500h8" stroke="#e4405a" stroke-width="2" /></svg></button>
      <button class="open" aria-label="Excel"><svg viewBox="0 0 24 24"><path d="M6 1h18v21H6z" fill="#21a366" /><path d="M15 1h9v7h-9z" fill="#33c481" /><path d="M6 8h9v7H6zM15 15h9v7h-9z" fill="#107c41" /><path d="M6 15h9v7H6z" fill="#185c37" /><path d="M0 6h12v12H0z" fill="#107c41" /><path d="M3.500 8.500l5 7M8.500 8.500l-5 7" stroke="#fff" stroke-width="1.800" /></svg></button>
      <button class="open" aria-label="虚拟机"><svg viewBox="0 0 24 24"><path d="M1 2h22v19H1z" fill="#f6f6f6" stroke="#98a0a8" /><path d="M1 2h22v3H1z" fill="#c9ced4" /><path d="M3 7h9v11H3z" fill="#3e8a8f" /><path d="M3 14l9-6v10H3z" fill="#56a66e" /><path d="M14 8h5M14 11h5M14 14h5M14 17h5" stroke="#b0b4b8" /><path d="M20.500 7v6" stroke="#2255b8" stroke-width="1.500" /></svg></button>
    </div>
    <div class="tray">
      <svg viewBox="0 0 16 16"><path d="M3 11l5-5 5 5" /></svg>
      <span class="ime">中</span>
      <svg viewBox="0 0 16 16"><path d="M1 6.500a10 10 0 0 1 14 0M3 9a7 7 0 0 1 10 0M5.300 11.300a4 4 0 0 1 5.400 0" /><circle cx="8" cy="13" r="1" /></svg>
      <svg viewBox="0 0 16 16"><path d="M1 6h3l3-3v10l-3-3H1zM10 6l5 5M15 6l-5 5" /></svg>
      <svg viewBox="0 0 16 16"><rect x="1" y="4" width="12" height="8" rx="1.500" /><path d="M3.500 6v4M15 7v2" stroke-width="2.500" /></svg>
      <div class="clock"><span>17:15</span><span>2025/2/21</span></div>
    </div>
  </footer>
</div>

<style>
  :global(body) { margin: 0; }
  .screen, .screen :global(*) { box-sizing: border-box; }
  .screen { height: 100vh; display: flex; flex-direction: column; overflow: hidden; font: 12px/18px "Noto Sans", "Noto Sans CJK SC", sans-serif; color: #000; background: #f0f0f0; }
  button { font: inherit; color: inherit; background: none; border: 0; padding: 0; display: flex; align-items: center; justify-content: center; }
  h1, h2, h3, p, ul, dl, dd { margin: 0; padding: 0; list-style: none; font-weight: inherit; }
  .ic { flex: none; display: block; }
  .icons { display: flex; margin-left: auto; align-items: center; }
  .arrow { width: 10px; flex: none; display: flex; }
  .chev { fill: none; stroke: #4a4a4a; stroke-width: 2; display: block; }
  .colon { font-family: "Noto Sans CJK TC", sans-serif; }

  .host { flex: none; height: 83px; border-top: 2px solid #b4b4b4; background: #f1f1f1; }
  .hosttitle { height: 29px; display: flex; align-items: center; gap: 5px; padding: 0 1px 2px 6px; background: #f5f5f5; color: #8a8a8a; }
  .winbtns { margin-left: auto; display: flex; }
  .winbtns button { width: 46px; height: 26px; }
  .winbtns svg { width: 11px; height: 11px; fill: none; stroke: #777; }
  .hostmenu { display: flex; height: 25px; padding-left: 13px; gap: 21px; }
  .hosttools { display: flex; align-items: center; height: 25px; width: 289px; background: #fbfbfb; border-right: 1px solid #aaa; }
  .hosttools button { width: 24px; height: 24px; }
  .hosttools button:first-child { width: 23px; }
  .hsep { width: 1px; height: 18px; background: #b4b4b4; margin: 0 2px; }

  .tiatitle { flex: none; height: 23px; display: flex; align-items: center; gap: 6px; padding: 0 3px 0 4px; background: linear-gradient(#8a8a8a, #484848 7px, #1c1c1c 7px, #1c1c1c 22px, #000 22px); color: #fff; font-weight: 700; }
  .tiatitle .icons button { width: 16px; }
  .tiahead { flex: none; height: 51px; display: flex; justify-content: space-between; background: #ccc; border-bottom: 1px solid #1a2030; }
  .menu { display: flex; gap: 17px; padding: 5px 0 0 9px; height: 25px; }
  .tools { display: flex; align-items: center; height: 24px; padding-left: 7px; }
  .tools button { width: 24px; height: 24px; flex: none; }
  .tools .pm { width: 12px; }
  .tools .lab { width: auto; gap: 6px; font-size: 13px; padding: 0 6px 0 1px; }
  .tools .lab.off { color: #888; }
  .tools .sep { margin-right: 1px; }
  .sep { flex: none; width: 4px; height: 24px; background: repeating-linear-gradient(#999 0 1px, transparent 1px 3px) 1px 0 / 1px 100% no-repeat; }
  .search { width: 120px; height: 18px; margin: 0 5px 0 4px; padding: 0 3px; border: 1px solid #8a8a8a; background: #fff; font: inherit; border-radius: 0; }
  .search::placeholder { color: #777; }
  .brand { display: flex; flex-direction: column; align-items: flex-end; padding: 13px 24px 0 0; font-size: 13px; font-weight: 700; line-height: 16px; }
  .brand span { margin-right: 24px; }
  .brand strong { font-size: 15px; color: #6c6c6c; }

  .work { flex: 1; min-height: 0; display: flex; background: #1a2030; gap: 3px; }
  .leftstrip { width: 22px; flex: none; margin-right: -3px; background: #b1b1b1; border-right: 1px solid #1a2030; padding-top: 24px; }
  .leftstrip button { width: 21px; height: 222px; border: solid #fff; border-width: 1px 0; color: #fff; font-size: 15px; line-height: 17px; writing-mode: vertical-rl; text-orientation: sideways; transform: rotate(180deg); padding: 0 2px 0 0; }

  .left { width: 321px; flex: none; display: flex; flex-direction: column; background: #ccc; }
  .phead { flex: none; height: 27px; display: flex; align-items: center; padding: 0 1px 2px 6px; background: #b1b1b1; border-bottom: 3px solid #ff9e00; color: #fff; }
  .phead h2 { font-size: 15px; font-weight: 700; }
  .phead .icons button { width: 19px; }
  .tabs { flex: none; height: 25px; border-bottom: 1px solid #6e6e6e; padding: 3px 0 0 6px; display: flex; }
  .tabs button { width: 64px; height: 22px; margin-bottom: -1px; padding: 0 10px 3px 0; border: 1px solid #6e6e6e; border-bottom: 0; background: linear-gradient(#e2e2e2, #f0f0f0); font-size: 15px; font-weight: 700; }
  .ptools { flex: none; height: 27px; display: flex; align-items: center; padding: 0 4px 2px 7px; background: #e9e9e9; }
  .ptools .sep { margin-left: auto; }
  .ptools button { width: 22px; height: 22px; margin-right: 2px; }
  .ptools button:first-child { width: 16px; }
  .ptools .act { border: 1px solid #2c62d6; background: #fff; }
  .gap { flex: none; height: 21px; background: #c2c2c2; }
  .treewrap { flex: none; height: 472px; display: flex; overflow: hidden; }
  .tree { flex: 1; overflow: hidden; }
  .tree li { display: flex; height: 19px; background: #f0f0f0; border-bottom: 1px solid #fff; }
  .tree li.head { background: #e0e0e0; }
  .tree li.sel { background: #d0d6dc; }
  .tree li.sel .name { outline: 1px dashed #888; outline-offset: -1px; }
  .tree .strong span { font-weight: 700; font-size: 11px; }
  .name { flex: 1; display: flex; align-items: center; gap: 4px; white-space: pre; }
  .name .arrow { margin-right: 1px; }
  .l0 { padding-left: 4px; } .l1 { padding-left: 22px; } .l2 { padding-left: 40px; } .l3 { padding-left: 58px; }
  .cell { width: 19px; border-left: 1px solid #fff; display: flex; align-items: center; justify-content: center; }
  .cell.last { width: 20px; padding-right: 2px; }
  .head .cell { background: #ebebeb; }

  .vbar { flex: none; width: 18px; display: flex; flex-direction: column; background: #c2c2c2; }
  .sbtn { flex: none; width: 18px; height: 18px; border: 1px solid #8a8a8a; background: #e2e2e2; box-shadow: inset 0 0 0 1px #fff; }
  .track { flex: 1; display: flex; flex-direction: column; min-height: 0; }
  .thumb { border: 1px solid #8a8a8a; background: linear-gradient(90deg, #f2f2f2, #d4d4d4); box-shadow: inset 0 0 0 1px #fff; display: flex; align-items: center; justify-content: center; }
  .thumb i { width: 8px; height: 8px; background: repeating-linear-gradient(#555 0 1px, transparent 1px 2px); }
  .treebar .thumb { height: 135px; margin-top: 1px; }
  .evbar .thumb { height: 24px; margin-top: 33px; }
  .mainbar .thumb { height: 18px; }
  .plain { border-left: 1px solid #8a8a8a; }
  .plain .thumb { display: none; }
  .plain .sbtn { box-shadow: none; width: 17px; background: #d6d6d6; border-left: 0; border-right: 0; }
  .plain .chev { stroke: #8a8a8a; }
  .hbar { flex: none; height: 18px; display: flex; background: #c2c2c2; border-top: 1px solid #8a8a8a; }
  .hbar .sbtn { height: 17px; }
  .hbar .track { flex-direction: row; }
  .hbar .thumb { width: 102px; margin-left: 2px; background: linear-gradient(#f2f2f2, #d4d4d4); }
  .h2 .thumb { width: 135px; }
  .hbar .thumb i { background: repeating-linear-gradient(90deg, #555 0 1px, transparent 1px 2px); }

  .section { flex: none; height: 21px; display: flex; border-bottom: 1px solid #6e6e6e; background: linear-gradient(#f2f2f2, #e2e2e2 10px, #d4d4d4 10px); }
  .section button { width: 21px; border-right: 1px solid #6e6e6e; }
  .section .chev { stroke: #000; }
  .section h2 { font-size: 15px; font-weight: 700; line-height: 19px; padding-left: 4px; white-space: nowrap; }
  .detail { flex: 1; min-height: 0; display: flex; flex-direction: column; border-top: 3px solid #1a2030; }
  .dtools { flex: none; height: 26px; border-bottom: 1px solid #8a8a8a; background: #c6c6c6; }
  .dfilter { flex: none; height: 26px; background: #e0e0e0; }
  .dtable { flex: none; border-collapse: collapse; table-layout: fixed; width: 100%; }
  .dtable th { height: 19px; padding: 0 0 0 4px; text-align: left; font-weight: 400; color: #000; line-height: 16px; background: linear-gradient(#e4e4e4, #d2d2d2); border: 1px solid #aaa; border-width: 1px 1px 1px 0; }
  .dtable .c0 { width: 18px; } .dtable .c1 { width: 160px; }
  .drows { flex: 1; background: repeating-linear-gradient(#f0f0f0 0 18px, #fff 18px 19px); }

  main { flex: 1; min-width: 0; display: flex; flex-direction: column; }
  .mhead { flex: none; height: 27px; display: flex; align-items: center; gap: 8px; padding: 0 2px 4px 5px; background: #ff9e00; color: #fff; font-size: 13px; font-weight: 700; }
  .mhead .icons button { width: 18px; }
  .mbar { flex: none; height: 25px; background: #ccc; border-bottom: 1px solid #6e6e6e; }
  .mbody { flex: 1; min-height: 0; display: flex; background: #e9e9e9; border-bottom: 3px solid #1a2030; }
  .nav { width: 197px; flex: none; padding-top: 4px; background: #f0f0f0; }
  .nav li { height: 19px; display: flex; align-items: center; border-bottom: 1px solid #e6e6e6; }
  .nav a { color: #000; text-decoration: none; padding: 0 2px; }
  .nav a.on { background: #c3cdd9; }
  .n0 { padding-left: 4px; } .n0 .arrow { margin-right: 2px; }
  .n1 { padding-left: 20px; } .n1 .arrow { margin-right: 2px; }
  .splitter { width: 10px; flex: none; margin-top: 2px; border: 1px solid #8a8a8a; background: linear-gradient(90deg, #d6d6d6 5px, #8a8a8a 5px 6px, #eee 6px); display: flex; flex-direction: column; justify-content: center; gap: 10px; }
  .splitter button { height: 24px; width: 7px; font-size: 8px; background: #c2c2c2; }
  .content { flex: 1; min-width: 0; padding: 0 6px 0 11px; overflow: hidden; }
  h1 { font-size: 14px; line-height: 20px; padding: 12px 0 0 3px; height: 38px; display: flex; align-items: flex-start; gap: 10px; }
  h1::after { content: ""; flex: 1; height: 1px; background: #000; margin-top: 16px; }
  .box { background: #ccc; padding: 4px 24px 17px 0; }
  .box.next { margin-top: 6px; height: 60px; }
  h3 { font-size: 15px; font-weight: 700; padding-left: 14px; }
  h3.big { font-size: 16px; padding-left: 17px; margin-top: 20px; }
  .check { display: flex; align-items: center; gap: 3px; height: 16px; margin: 22px 0 12px 38px; }
  .check input { appearance: none; width: 16px; height: 15px; margin: 0; border: 1px solid #44484c; background: linear-gradient(135deg, #d7f2fb, #62c8e8); display: grid; place-items: center; }
  .check input::after { content: ""; width: 4px; height: 7px; border: solid #0d3f92; border-width: 0 3px 3px 0; transform: rotate(40deg); }
  .grid { margin-left: 38px; display: flex; border: solid #dadada; border-width: 0 1px 1px 0; }
  .events { flex: 1; min-width: 0; table-layout: fixed; border-collapse: collapse; }
  .k0 { width: 25px; } .k1 { width: 40px; } .k2 { width: 160px; } .k4 { width: 19px; } .k6 { width: 26px; }
  .events th { height: 20px; padding: 0 3px; text-align: left; font-weight: 400; line-height: 17px; background: linear-gradient(#f0f0f0, #e0e0e0 9px, #d0d0d0 9px, #dedede); border: 1px solid #b8b8b8; border-left: 1px solid #d8d8d8; border-right: 0; }
  .events td { height: 19px; padding: 0 3px 0 4px; line-height: 17px; white-space: pre; overflow: hidden; background: #e8dac4; border-bottom: 1px solid #d8d8d8; }
  .events td:first-child { background: #ccc; }
  .events td:last-child { background: #f0f0f0; }
  .events .im { padding: 0 0 0 1px; }
  .events .picked td { background: #b3c1de; }
  .events .picked td:first-child { background: #c0cbd6; }
  .events .picked td:last-child { background: #f0f0f0; }
  .events .picked .txt { outline: 1px dashed #2c62d6; outline-offset: -1px; }
  .gridbar { width: 18px; flex: none; display: flex; flex-direction: column; }
  .corner { height: 20px; flex: none; background: linear-gradient(#f0f0f0, #e0e0e0 9px, #d0d0d0 9px, #dedede); border: 1px solid #b8b8b8; }
  .evbar { flex: 1; }
  .btn { width: 119px; height: 21px; flex: none; border: 1px solid #7c7c7c; border-radius: 2px; background: linear-gradient(#fafafa, #e6e6e6 10px, #d2d2d2 10px, #e2e2e2); box-shadow: inset 0 0 0 1px #c4c4c4; }
  .freeze { margin: 3px 0 0 38px; }
  .form { margin-top: 15px; display: flex; flex-direction: column; gap: 6px; }
  .row { display: flex; }
  .row label { width: 192px; margin-right: 11px; text-align: right; color: #8c8c8c; line-height: 17px; }
  .row input, .area { height: 18px; border: 1px solid #8a8a8a; background: #e8dac4; font: inherit; color: #000; padding: 0 3px; border-radius: 0; outline: 0; }
  .w50 { width: 50px; } .w180 { width: 180px; } .wide { flex: 1; } .fill { flex: 1; }
  .slash { width: 80px; text-align: center; color: #8c8c8c; padding-left: 8px; }
  .area { flex: 1; display: flex; padding: 0; }
  .a1 { height: 96px; } .a2 { height: 110px; }
  textarea { flex: 1; border: 0; background: none; resize: none; overflow: hidden; padding: 1px 3px; font: inherit; line-height: 14px; outline: 0; }
  .actions { display: flex; gap: 6px; padding-left: 203px; margin-top: 2px; }
  .mtabs { flex: none; height: 29px; display: flex; align-items: flex-start; gap: 2px; padding: 3px 2px 0 0; background: linear-gradient(#b1b1b1 24px, #ff9e00 24px 27px, #dcdcdc 27px); justify-content: flex-end; }
  .mtabs > button { width: 76px; height: 21px; justify-content: flex-start; gap: 6px; padding-left: 2px; border: 1px solid #6e6e6e; border-bottom: 0; background: linear-gradient(#d8d8d8, #e4e4e4); font-size: 15px; font-weight: 600; color: #555; }
  .mtabs > .on { height: 26px; padding-bottom: 5px; background: #eee; color: #000; border-top: 2px solid #ff9e00; border-left: 0; font-weight: 700; }
  .mtabs .icons { margin-left: 14px; height: 16px; }
  .mtabs .icons button { width: 18px; }

  .right { width: 189px; flex: none; display: flex; flex-direction: column; background: #e9e9e9; overflow: hidden; }
  .opt { flex: none; height: 25px; padding-left: 6px; font-size: 15px; font-weight: 700; line-height: 22px; background: linear-gradient(#fafafa 10px, #e2e2e2); border-bottom: 1px solid #6e6e6e; }
  .rtools { flex: none; height: 29px; display: flex; align-items: center; justify-content: flex-end; padding-right: 5px; border-bottom: 3px solid #999; }
  .hbar.h1 { margin-bottom: 4px; box-shadow: 0 4px 0 #999; }
  .hbar.h2 { margin-bottom: 3px; box-shadow: 0 3px 0 #999; }
  .cpu { flex: none; height: 202px; padding: 11px 0 0 13px; font-size: 11px; }
  .cpu p { padding-left: 3px; margin-bottom: 3px; white-space: nowrap; }
  .led { display: flex; align-items: center; height: 21px; margin-bottom: 5px; }
  .led i { width: 16px; height: 16px; flex: none; border: 1px solid #fff; margin-right: 8px; }
  .run { background: #0c0; } .err { background: #d0d0d0; } .mnt { background: #fff; }
  .led span { width: 78px; flex: none; }
  .led .btn { width: 92px; }
  .led .lit { background: #fff; box-shadow: none; }
  .cycle { flex: none; height: 202px; padding: 16px 0 0 9px; }
  .chart { display: block; font-size: 12px; }
  .chart .g { fill: #0a7a1a; }
  dl { padding: 18px 23px 0 4px; }
  dl div { display: flex; justify-content: space-between; }
  .c1 { color: #3c6060; } .c2 { color: #008000; } .c3 { color: #00f; }
  .mem { padding: 18px 0 0 18px; }
  .m { height: 48px; line-height: 20px; }
  .mr { display: flex; padding-left: 4px; gap: 16px; line-height: 18px; white-space: nowrap; align-items: flex-start; }
  .meter { width: 94px; height: 17px; margin-top: 4px; flex: none; background: #00ff80; display: flex; }
  .meter i { background: #00f; }
  .mr span { flex: none; }

  .rightstrip { width: 25px; flex: none; margin-left: -2px; background: #b1b1b1; padding-top: 30px; display: flex; flex-direction: column; gap: 3px; }
  .rightstrip button { width: 21px; flex-direction: column; justify-content: flex-start; gap: 8px; padding-top: 2px; border: 1px solid #6e6e6e; border-left: 0; background: linear-gradient(90deg, #d8d8d8 10px, #ccc 10px); color: #666; font-size: 14px; font-weight: 600; }
  .rightstrip .on { background: #f0f0f0; color: #111; }
  .rightstrip span { writing-mode: vertical-rl; text-orientation: sideways; line-height: 18px; }
  .t1 { height: 108px; } .t2 { height: 75px; } .t3 { height: 60px; } .t4 { height: 94px; }
  .rightstrip .t1 { font-size: 15px; }
  .rightstrip .t4 { font-size: 13px; gap: 5px; }

  .taskbar { flex: none; height: 48px; border-top: 1px solid #c0c0c0; background: #eeefef; display: flex; justify-content: space-between; align-items: center; padding: 0 17px 2px 11px; }
  .apps { display: flex; }
  .apps button { width: 44px; height: 44px; position: relative; }
  .apps svg { width: 24px; height: 24px; }
  .open::after, .cur::after { content: ""; position: absolute; bottom: 3px; width: 6px; height: 3px; border-radius: 2px; background: #8a8a8a; }
  .cur::after { width: 24px; background: linear-gradient(90deg, #0b67c0 50%, #999 50%); }
  .tray { display: flex; align-items: center; gap: 8px; }
  .tray svg { width: 16px; height: 16px; fill: none; stroke: #1c1c1c; stroke-width: 1.200; }
  .ime { font-size: 15px; margin: 0 8px; }
  .clock { display: flex; flex-direction: column; text-align: right; line-height: 16px; margin-left: 8px; color: #1c1c1c; }
</style>
